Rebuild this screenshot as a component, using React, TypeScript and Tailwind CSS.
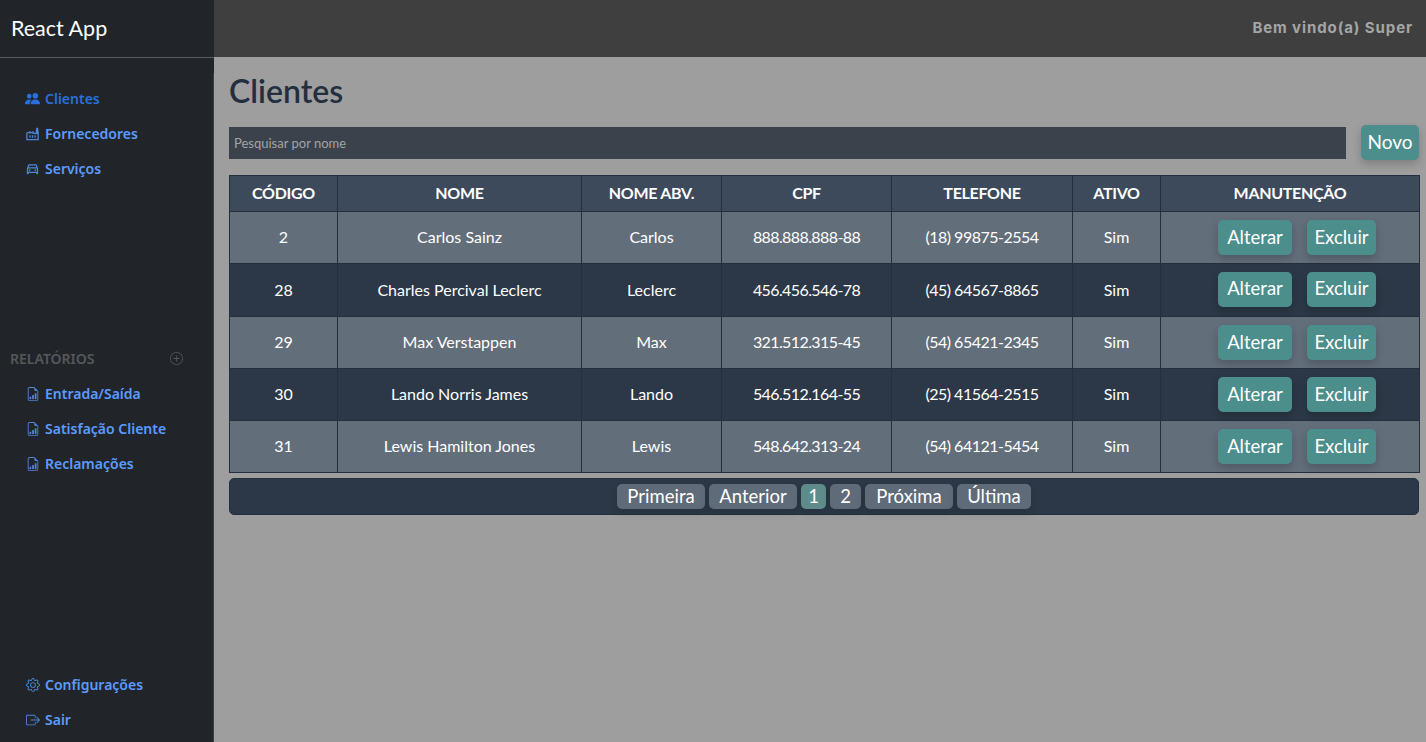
import { BsBoxArrowRight, BsFileEarmarkBarGraph, BsGear, BsPeopleFill, BsPlusCircle } from 'react-icons/bs';
import { MdOutlineDirectionsCar, MdOutlineFactory } from 'react-icons/md';
import type { ReactNode } from 'react';

const clientes = [
  { id: 2, nome: 'Carlos Sainz', abv: 'Carlos', cpf: '888.888.888-88', tel: '(18) 99875-2554' },
  { id: 28, nome: 'Charles Percival Leclerc', abv: 'Leclerc', cpf: '456.456.546-78', tel: '(45) 64567-8865' },
  { id: 29, nome: 'Max Verstappen', abv: 'Max', cpf: '321.512.315-45', tel: '(54) 65421-2345' },
  { id: 30, nome: 'Lando Norris James', abv: 'Lando', cpf: '546.512.164-55', tel: '(25) 41564-2515' },
  { id: 31, nome: 'Lewis Hamilton Jones', abv: 'Lewis', cpf: '548.642.313-24', tel: '(54) 64121-5454' },
];

function NavItem({ icon, label, active }: { icon: ReactNode; label: string; active?: boolean }) {
  return (
    <a className={`flex h-[35px] items-center gap-[5px] pl-[25px] text-[14px] font-semibold ${active ? 'text-[#2a6fdb]' : 'text-[#5b9bff]'}`}>
      <span className={`flex w-[15px] justify-center text-[15px] ${active ? 'text-[#2a6fdb]' : 'text-[#4f86d9]'}`}>{icon}</span>
      {label}
    </a>
  );
}

function ActionButton({ label, className }: { label: string; className: string }) {
  return (
    <button className={`h-[35px] rounded-[5px] bg-[#4c8e8c] text-[18.5px] text-white shadow-[0_4px_8px_rgba(0,0,0,0.2)] ${className}`}>
      {label}
    </button>
  );
}

function PageButton({ label, className, active }: { label: string; className: string; active?: boolean }) {
  return (
    <button className={`h-[25px] rounded-[5px] text-[18.5px] leading-[25px] text-white shadow-[0_4px_8px_rgba(0,0,0,0.12)] ${active ? 'bg-[#5f8c8a]' : 'bg-[#5f6b78]'} ${className}`}>
      {label}
    </button>
  );
}

export default function App() {
  return (
    <div className="flex h-[742px] w-[1426px] overflow-hidden bg-[#9e9e9e] font-['Lato',sans-serif]">
      <aside className="relative flex w-[214px] shrink-0 flex-col bg-[#212529] font-['Noto_Sans',sans-serif]">
        <div className="absolute top-[73px] right-0 bottom-0 w-px bg-[#3a3d41]" />
        <div className="flex h-[58px] items-center border-b border-[#5a5c5f] pl-[11px] font-['Lato',sans-serif] text-[21.5px] text-white">
          React App
        </div>
        <nav className="mt-[23px] flex flex-col">
          <NavItem active icon={<BsPeopleFill />} label="Clientes" />
          <NavItem icon={<MdOutlineFactory className="text-[16px]" />} label="Fornecedores" />
          <NavItem icon={<MdOutlineDirectionsCar className="text-[17px]" />} label="Serviços" />
        </nav>
        <div className="mt-[155px] flex h-[35px] items-center justify-between pl-[10px] pr-[31px] text-[14px] font-semibold text-[#55585b]">
          RELATÓRIOS
          <BsPlusCircle className="text-[13px]" />
        </div>
        <nav className="flex flex-col">
          <NavItem icon={<BsFileEarmarkBarGraph className="text-[14px]" />} label="Entrada/Saída" />
          <NavItem icon={<BsFileEarmarkBarGraph className="text-[14px]" />} label="Satisfação Cliente" />
          <NavItem icon={<BsFileEarmarkBarGraph className="text-[14px]" />} label="Reclamações" />
        </nav>
        <nav className="mt-auto mb-[5px] flex flex-col">
          <NavItem icon={<BsGear className="text-[14px]" />} label="Configurações" />
          <NavItem icon={<BsBoxArrowRight className="text-[14px]" />} label="Sair" />
        </nav>
      </aside>
      <div className="flex min-w-0 flex-1 flex-col">
        <header className="flex h-[57px] items-center justify-end bg-[#3f3f40] pr-[13px] pb-[1px] font-['Inter',sans-serif] text-[15px] font-bold tracking-[0.9px] text-[#a5a5a5]">
          Bem vindo(a) Super
        </header>
        <main className="pl-[15px] pr-[7px]">
          <h1 className="mt-[14px] h-[40px] text-[32px] leading-[40px] font-semibold text-[#232f40]">Clientes</h1>
          <div className="mt-[14px] flex items-center justify-between">
            <input
              placeholder="Pesquisar por nome"
              className="h-[32px] w-[1117px] bg-[#3c424b] px-[5px] text-[13px] text-white outline-none placeholder:text-[#a0a4a9]"
            />
            <button className="h-[35px] w-[58px] rounded-[5px] bg-[#4c8e8c] text-[19px] text-white shadow-[0_4px_8px_rgba(0,0,0,0.2)]">
              Novo
            </button>
          </div>
          <table className="mt-[15px] w-[1190px] table-fixed border-collapse border border-[#232f3e] text-center text-[16px] text-white">
            <colgroup>
              <col className="w-[108px]" />
              <col className="w-[244px]" />
              <col className="w-[140px]" />
              <col className="w-[170px]" />
              <col className="w-[181px]" />
              <col className="w-[88px]" />
              <col className="w-[259px]" />
            </colgroup>
            <thead className="bg-[#3d4a5c]">
              <tr className="h-[36px]">
                {['CÓDIGO', 'NOME', 'NOME ABV.', 'CPF', 'TELEFONE', 'ATIVO', 'MANUTENÇÃO'].map((h) => (
                  <th key={h} className="border border-[#232f3e] p-0 pb-[2px] font-bold tracking-[-0.3px]">{h}</th>
                ))}
              </tr>
            </thead>
            <tbody>
              {clientes.map((c, i) => {
                const cell = `border border-[#232f3e] p-0 ${i === 1 ? '' : 'pb-[2px]'}`;
                return (
                  <tr key={c.id} className={`${i === 1 ? 'h-[53px]' : 'h-[52px]'} ${i % 2 === 0 ? 'bg-[#636e7b]' : 'bg-[#2c3847]'}`}>
                    <td className={cell}>{c.id}</td>
                    <td className={cell}>{c.nome}</td>
                    <td className={cell}>{c.abv}</td>
                    <td className={`${cell} tracking-[-0.6px]`}>{c.cpf}</td>
                    <td className={`${cell} tracking-[-0.5px]`}>{c.tel}</td>
                    <td className={cell}>Sim</td>
                    <td className={`border border-[#232f3e] p-0 ${i === 1 ? 'pb-[2px]' : ''}`}>
                      <div className="flex justify-center gap-[15px] pl-[14px]">
                        <ActionButton label="Alterar" className="w-[74px]" />
                        <ActionButton label="Excluir" className="w-[69px]" />
                      </div>
                    </td>
                  </tr>
                );
              })}
            </tbody>
          </table>
          <div className="mt-[5px] flex h-[37px] w-[1190px] items-center justify-center gap-[4px] rounded-[5px] border border-[#232f3e] bg-[#2c3847]">
            <PageButton label="Primeira" className="w-[88px]" />
            <PageButton label="Anterior" className="w-[88px]" />
            <PageButton active label="1" className="w-[25px]" />
            <PageButton label="2" className="w-[31px]" />
            <PageButton label="Próxima" className="w-[88px]" />
            <PageButton label="Última" className="w-[74px]" />
          </div>
        </main>
      </div>
    </div>
  );
}
